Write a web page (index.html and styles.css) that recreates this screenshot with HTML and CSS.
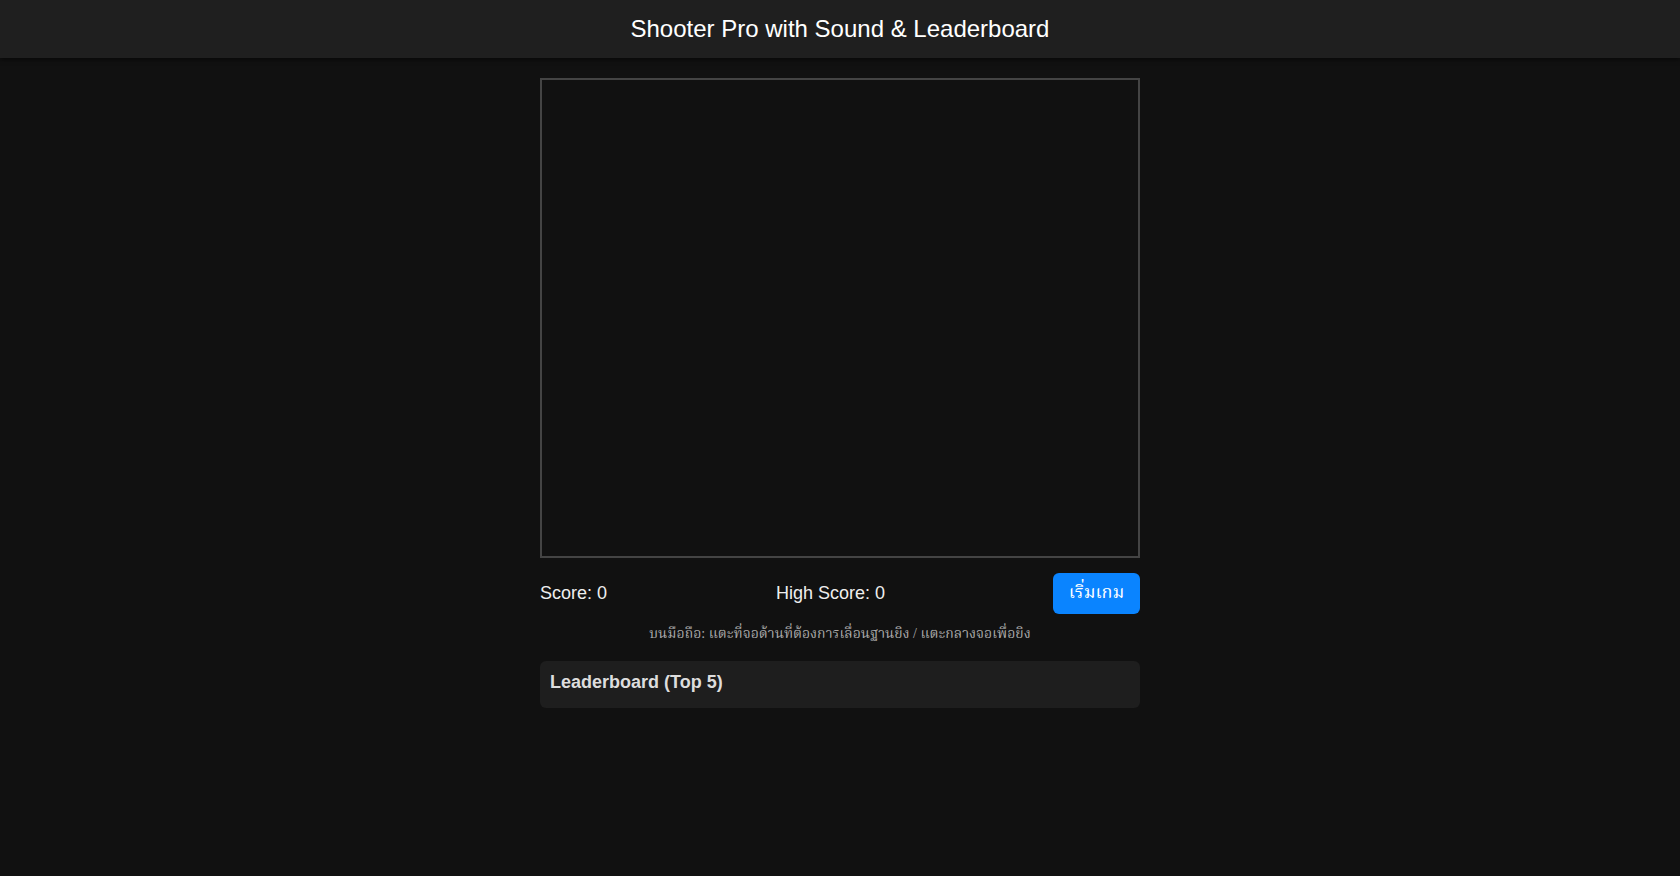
FILE: index.html
```html
<!DOCTYPE html>
<html lang="th">
<head>
<meta charset="utf-8">
<title>Shooter Pro</title>
<link rel="stylesheet" href="styles.css">
</head>
<body>
<header class="topbar">
  <h1 class="title">Shooter Pro with Sound &amp; Leaderboard</h1>
</header>
<main class="wrap">
  <div class="game"></div>
  <div class="hud">
    <div class="score">Score: 0</div>
    <div class="high">High Score: 0</div>
    <button class="start">เริ่มเกม</button>
  </div>
  <p class="hint">บนมือถือ: แตะที่จอด้านที่ต้องการเลื่อนฐานยิง / แตะกลางจอเพื่อยิง</p>
  <section class="board">
    <h3 class="board-title">Leaderboard (Top 5)</h3>
  </section>
</main>
</body>
</html>
```
FILE: styles.css
```css
* { box-sizing: border-box; }
html, body { margin: 0; }
body {
  background: #111111;
  color: #eeeeee;
  font-family: "Liberation Sans", Arial, sans-serif;
  height: 876px;
  overflow: hidden;
}
.topbar {
  background: #1f1f1f;
  height: 58px;
  display: flex;
  align-items: center;
  justify-content: center;
  box-shadow: 0 2px 4px rgba(0,0,0,0.5);
}
.title {
  margin: 0;
  font-size: 24px;
  font-weight: normal;
  color: #ffffff;
}
.wrap {
  width: 600px;
  margin: 20px auto 0;
}
.game {
  width: 600px;
  height: 480px;
  border: 2px solid #444444;
  background: #111111;
}
.hud {
  margin-top: 15px;
  display: grid;
  grid-template-columns: 1fr auto 1fr;
  align-items: center;
  font-size: 18px;
  color: #eeeeee;
}
.high { margin-left: -19px; }
.start {
  justify-self: end;
  background: #0a84ff;
  color: #ffffff;
  border: 0;
  border-radius: 6px;
  height: 41px;
  width: 87px;
  font-size: 18px;
  font-family: "Liberation Serif", "Noto Serif Thai ExtraCondensed", "Noto Serif Thai", serif;
  font-stretch: extra-condensed;
  padding: 0;
}
.hint {
  margin: 10px 0 0;
  text-align: center;
  font-size: 14px;
  color: #aaaaaa;
  line-height: 20px;
  font-family: "Liberation Serif", "Noto Serif Thai ExtraCondensed", "Noto Serif Thai", serif;
  font-stretch: extra-condensed;
}
.board {
  margin-top: 17px;
  background: #1e1e1e;
  border-radius: 6px;
  padding: 11px 10px 15px;
}
.board-title {
  margin: 0;
  font-size: 18px;
  font-weight: bold;
  color: #dddddd;
}
```
